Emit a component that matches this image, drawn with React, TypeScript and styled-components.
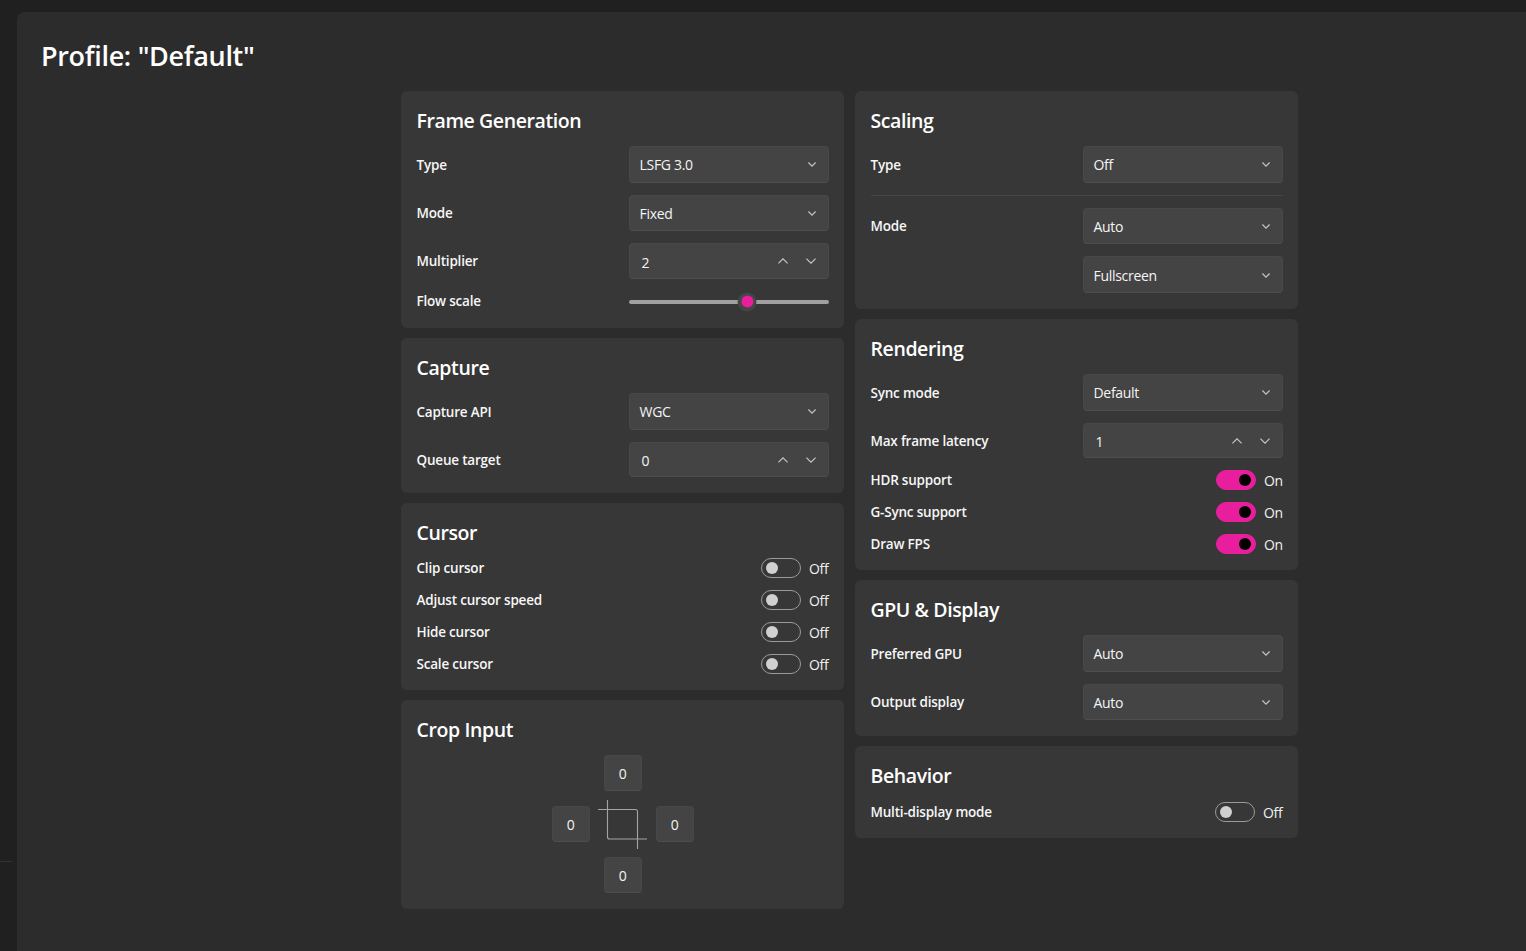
import React from "react";
import styled, { createGlobalStyle } from "styled-components";

const Global = createGlobalStyle`
  html, body { margin: 0; padding: 0; height: 100%; background: #202020; overflow: hidden; }
  body { font-family: "Open Sans", "Noto Sans", "Liberation Sans", sans-serif; color: #fff; }
  * { box-sizing: border-box; }
`;

const Shell = styled.div`
  display: flex;
  width: 1526px;
  height: 951px;
  background: #202020;
  padding-top: 12px;
  overflow: hidden;
`;
const Rail = styled.div`
  width: 17px;
  flex: none;
  padding-top: 849px;
`;
const RailLine = styled.div`
  width: 12px;
  height: 1px;
  background: #333333;
`;
const Main = styled.main`
  flex: 1;
  background: #2c2c2c;
  border-top-left-radius: 8px;
  padding: 24px 0 0 24px;
`;
const PageTitle = styled.h1`
  margin: 0 0 15px;
  height: 40px;
  line-height: 40px;
  font-size: 27px;
  font-weight: 600;
  letter-spacing: -0.32px;
`;
const Columns = styled.div`
  display: grid;
  grid-template-columns: 443px 443px;
  column-gap: 11px;
  margin-left: 360px;
  align-items: start;
`;
const Stack = styled.div`
  display: flex;
  flex-direction: column;
  gap: 10px;
`;
const Card = styled.section`
  background: #373737;
  border-radius: 6px;
  padding: 15px 15px 16px 15.5px;
`;
const CardTitle = styled.h2`
  margin: 0 0 10px;
  height: 30px;
  line-height: 30px;
  font-size: 19.5px;
  font-weight: 600;
  letter-spacing: -0.4px;
`;
const Rows = styled.div`
  display: flex;
  flex-direction: column;
  gap: 12px;
`;
const Row = styled.div`
  display: flex;
  align-items: center;
  justify-content: space-between;
`;
const Label = styled.span`
  font-size: 13.5px;
  font-weight: 600;
  letter-spacing: -0.2px;
  color: #f6f6f6;
  position: relative;
  top: 0.4px;
`;
const SliderLabel = styled(Label)`
  top: -0.6px;
`;
const Field = styled.div<{ $h: number }>`
  width: 200px;
  height: ${(p) => p.$h}px;
  display: flex;
  align-items: center;
  justify-content: space-between;
  background: #444444;
  border: 1px solid #484848;
  border-bottom-color: #4e4e4e;
  border-radius: 4px;
  font-size: 14px;
  letter-spacing: -0.3px;
  color: #f4f4f4;
`;
const SelectField = styled(Field)`
  padding: 1px 12px 0 9.5px;
`;
const StepperField = styled(Field)`
  padding: 3px 12px 0 11.5px;
`;
const Arrows = styled.span`
  display: flex;
  gap: 18px;
  margin-top: -2px;
`;
const Chevron = styled.svg`
  display: block;
  fill: none;
  stroke: #c4c4c4;
  stroke-width: 1.2;
`;
const Divider = styled.div`
  height: 1px;
  background: #454545;
`;
const SliderRow = styled(Row)`
  height: 21.33px;
`;
const Track = styled.div`
  position: relative;
  width: 200px;
  height: 4px;
  margin-top: 1px;
  background: #a0a0a0;
  border-radius: 2px;
`;
const Thumb = styled.span`
  position: absolute;
  top: 50%;
  width: 19px;
  height: 19px;
  transform: translate(-50%, -50%);
  display: flex;
  align-items: center;
  justify-content: center;
  background: #454545;
  border-radius: 50%;
  &::after {
    content: "";
    width: 12px;
    height: 12px;
    border-radius: 50%;
    background: #e91e9c;
  }
`;
const ToggleWrap = styled.div`
  display: flex;
  align-items: center;
  gap: 8px;
`;
const Pill = styled.span<{ $on: boolean }>`
  width: 40px;
  height: 20px;
  display: flex;
  align-items: center;
  justify-content: ${(p) => (p.$on ? "flex-end" : "flex-start")};
  padding: 0 4px;
  border-radius: 10px;
  background: ${(p) => (p.$on ? "#e91e9c" : "transparent")};
  border: 1px solid ${(p) => (p.$on ? "#e91e9c" : "#9a9a9a")};
  &::after {
    content: "";
    width: 12px;
    height: 12px;
    border-radius: 50%;
    background: ${(p) => (p.$on ? "#000" : "#d0d0d0")};
  }
`;
const ToggleState = styled.span<{ $on: boolean }>`
  width: ${(p) => (p.$on ? 19 : 20)}px;
  height: 20px;
  line-height: 22px;
  font-size: 14px;
  letter-spacing: -0.3px;
  color: #f0f0f0;
  white-space: nowrap;
`;
const BehaviorBody = styled.div`
  padding-top: 0.67px;
`;
const CropGrid = styled.div`
  display: grid;
  grid-template-columns: repeat(3, 38px);
  grid-template-rows: repeat(3, 36px);
  gap: 15px 14px;
  justify-content: center;
`;
const CropBox = styled.div<{ $col: number; $row: number }>`
  grid-column: ${(p) => p.$col};
  grid-row: ${(p) => p.$row};
  display: flex;
  align-items: center;
  justify-content: center;
  padding-top: 1px;
  background: #444444;
  border: 1px solid #484848;
  border-bottom-color: #4e4e4e;
  border-radius: 4px;
  font-size: 14px;
  color: #f4f4f4;
`;
const CropIcon = styled.svg`
  grid-column: 2;
  grid-row: 2;
  margin: -6px 0 0 -6px;
  width: 50px;
  height: 50px;
  fill: none;
  stroke: #a4a4a4;
  stroke-width: 1.1;
`;

const Down = () => (
  <Chevron width="8" height="5" viewBox="0 0 8 5"><path d="M0.4 0.5 L4 4.1 L7.6 0.5" /></Chevron>
);
const StepDown = () => (
  <Chevron width="10" height="6" viewBox="0 0 10 6"><path d="M0.4 0.6 L5 5.2 L9.6 0.6" /></Chevron>
);
const StepUp = () => (
  <Chevron width="10" height="6" viewBox="0 0 10 6"><path d="M0.4 5.4 L5 0.8 L9.6 5.4" /></Chevron>
);

const Select = ({ value }: { value: string }) => (
  <SelectField $h={36.67}>
    <span>{value}</span>
    <Down />
  </SelectField>
);
const Stepper = ({ value }: { value: string }) => (
  <StepperField $h={35.33}>
    <span>{value}</span>
    <Arrows>
      <StepUp />
      <StepDown />
    </Arrows>
  </StepperField>
);
const Toggle = ({ label, on }: { label: string; on: boolean }) => (
  <Row>
    <Label>{label}</Label>
    <ToggleWrap>
      <Pill $on={on} />
      <ToggleState $on={on}>{on ? "On" : "Off"}</ToggleState>
    </ToggleWrap>
  </Row>
);
const SelectRow = ({ label, value }: { label: string; value: string }) => (
  <Row>
    <Label>{label}</Label>
    <Select value={value} />
  </Row>
);
const StepperRow = ({ label, value }: { label: string; value: string }) => (
  <Row>
    <Label>{label}</Label>
    <Stepper value={value} />
  </Row>
);

export default function App() {
  return (
    <>
      <Global />
      <Shell>
        <Rail>
          <RailLine />
        </Rail>
        <Main>
          <PageTitle>Profile: "Default"</PageTitle>
          <Columns>
            <Stack>
              <Card>
                <CardTitle>Frame Generation</CardTitle>
                <Rows>
                  <SelectRow label="Type" value="LSFG 3.0" />
                  <SelectRow label="Mode" value="Fixed" />
                  <StepperRow label="Multiplier" value="2" />
                  <SliderRow>
                    <SliderLabel>Flow scale</SliderLabel>
                    <Track>
                      <Thumb style={{ left: `${(118 / 200) * 100}%` }} />
                    </Track>
                  </SliderRow>
                </Rows>
              </Card>
              <Card>
                <CardTitle>Capture</CardTitle>
                <Rows>
                  <SelectRow label="Capture API" value="WGC" />
                  <StepperRow label="Queue target" value="0" />
                </Rows>
              </Card>
              <Card>
                <CardTitle>Cursor</CardTitle>
                <Rows>
                  <Toggle label="Clip cursor" on={false} />
                  <Toggle label="Adjust cursor speed" on={false} />
                  <Toggle label="Hide cursor" on={false} />
                  <Toggle label="Scale cursor" on={false} />
                </Rows>
              </Card>
              <Card>
                <CardTitle>Crop Input</CardTitle>
                <CropGrid>
                  <CropBox $col={2} $row={1}>0</CropBox>
                  <CropBox $col={1} $row={2}>0</CropBox>
                  <CropIcon viewBox="0 0 50 50">
                    <path d="M9.5 0 V37 a2 2 0 0 0 2 2 H49" />
                    <path d="M0 9.5 H37.5 a2 2 0 0 1 2 2 V49" />
                  </CropIcon>
                  <CropBox $col={3} $row={2}>0</CropBox>
                  <CropBox $col={2} $row={3}>0</CropBox>
                </CropGrid>
              </Card>
            </Stack>
            <Stack>
              <Card>
                <CardTitle>Scaling</CardTitle>
                <Rows>
                  <SelectRow label="Type" value="Off" />
                  <Divider />
                  <SelectRow label="Mode" value="Auto" />
                  <SelectRow label="" value="Fullscreen" />
                </Rows>
              </Card>
              <Card>
                <CardTitle>Rendering</CardTitle>
                <Rows>
                  <SelectRow label="Sync mode" value="Default" />
                  <StepperRow label="Max frame latency" value="1" />
                  <Toggle label="HDR support" on />
                  <Toggle label="G-Sync support" on />
                  <Toggle label="Draw FPS" on />
                </Rows>
              </Card>
              <Card>
                <CardTitle>GPU &amp; Display</CardTitle>
                <Rows>
                  <SelectRow label="Preferred GPU" value="Auto" />
                  <SelectRow label="Output display" value="Auto" />
                </Rows>
              </Card>
              <Card>
                <CardTitle>Behavior</CardTitle>
                <BehaviorBody>
                  <Toggle label="Multi-display mode" on={false} />
                </BehaviorBody>
              </Card>
            </Stack>
          </Columns>
        </Main>
      </Shell>
    </>
  );
}
